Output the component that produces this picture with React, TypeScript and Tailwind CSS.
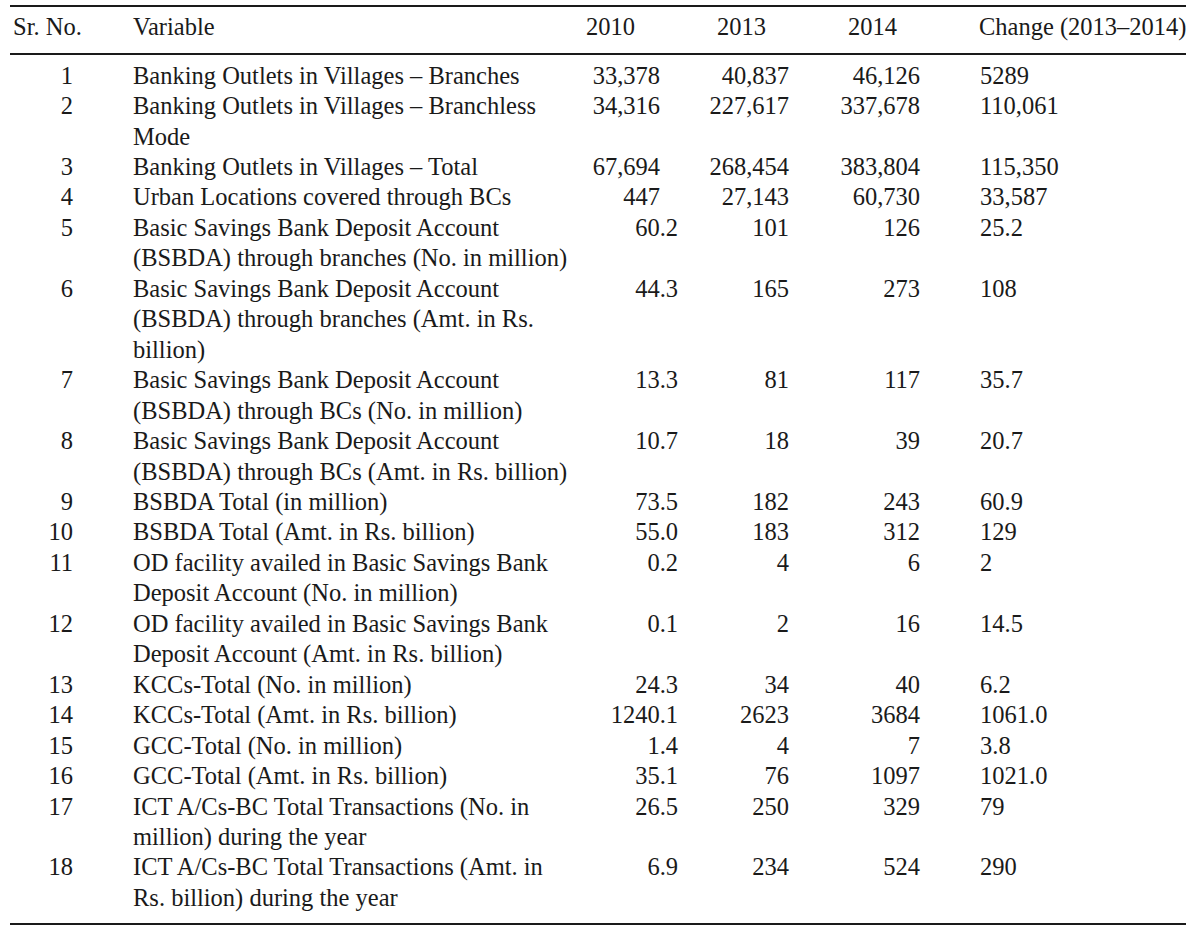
import React from "react";

type Row = {
  n: string;
  v: string[];
  a: string;
  b: string;
  c: string;
  d: string;
};

const rows: Row[] = [
  { n: "1", v: ["Banking Outlets in Villages – Branches"], a: "33,378", b: "40,837", c: "46,126", d: "5289" },
  { n: "2", v: ["Banking Outlets in Villages – Branchless", "Mode"], a: "34,316", b: "227,617", c: "337,678", d: "110,061" },
  { n: "3", v: ["Banking Outlets in Villages – Total"], a: "67,694", b: "268,454", c: "383,804", d: "115,350" },
  { n: "4", v: ["Urban Locations covered through BCs"], a: "447", b: "27,143", c: "60,730", d: "33,587" },
  { n: "5", v: ["Basic Savings Bank Deposit Account", "(BSBDA) through branches (No. in million)"], a: "60.2", b: "101", c: "126", d: "25.2" },
  { n: "6", v: ["Basic Savings Bank Deposit Account", "(BSBDA) through branches (Amt. in Rs.", "billion)"], a: "44.3", b: "165", c: "273", d: "108" },
  { n: "7", v: ["Basic Savings Bank Deposit Account", "(BSBDA) through BCs (No. in million)"], a: "13.3", b: "81", c: "117", d: "35.7" },
  { n: "8", v: ["Basic Savings Bank Deposit Account", "(BSBDA) through BCs (Amt. in Rs. billion)"], a: "10.7", b: "18", c: "39", d: "20.7" },
  { n: "9", v: ["BSBDA Total (in million)"], a: "73.5", b: "182", c: "243", d: "60.9" },
  { n: "10", v: ["BSBDA Total (Amt. in Rs. billion)"], a: "55.0", b: "183", c: "312", d: "129" },
  { n: "11", v: ["OD facility availed in Basic Savings Bank", "Deposit Account (No. in million)"], a: "0.2", b: "4", c: "6", d: "2" },
  { n: "12", v: ["OD facility availed in Basic Savings Bank", "Deposit Account (Amt. in Rs. billion)"], a: "0.1", b: "2", c: "16", d: "14.5" },
  { n: "13", v: ["KCCs-Total (No. in million)"], a: "24.3", b: "34", c: "40", d: "6.2" },
  { n: "14", v: ["KCCs-Total (Amt. in Rs. billion)"], a: "1240.1", b: "2623", c: "3684", d: "1061.0" },
  { n: "15", v: ["GCC-Total (No. in million)"], a: "1.4", b: "4", c: "7", d: "3.8" },
  { n: "16", v: ["GCC-Total (Amt. in Rs. billion)"], a: "35.1", b: "76", c: "1097", d: "1021.0" },
  { n: "17", v: ["ICT A/Cs-BC Total Transactions (No. in", "million) during the year"], a: "26.5", b: "250", c: "329", d: "79" },
  { n: "18", v: ["ICT A/Cs-BC Total Transactions (Amt. in", "Rs. billion) during the year"], a: "6.9", b: "234", c: "524", d: "290" },
];

const grid = "grid grid-cols-[123px_437px_108px_111px_131px_266px]";

export default function App() {
  return (
    <div
      className="min-h-[932px] w-[1196px] bg-white pl-[10px] pt-[5px] text-[24.5px] leading-[30.45px] text-[#1a1a1a]"
      style={{ fontFamily: '"Liberation Serif", "Times New Roman", serif' }}
    >
      <div className="w-[1176px] border-y-2 border-[#1a1a1a]">
        <div className={`${grid} border-b-2 border-[#1a1a1a] pb-[10.5px] pt-[5px]`}>
          <div className="pl-[3px] whitespace-nowrap">Sr. No.</div>
          <div>Variable</div>
          <div className="pl-[16px]">2010</div>
          <div className="pl-[39px]">2013</div>
          <div className="pl-[59px]">2014</div>
          <div className="pl-[59px] whitespace-nowrap">Change (2013–2014)</div>
        </div>
        <div className="pb-[9.5px] pt-[5.7px]">
          {rows.map((r) => {
            const isInt = !r.a.includes(".");
            return (
              <div key={r.n} className={grid}>
                <div className="w-[63px] text-right">{r.n}</div>
                <div className="whitespace-nowrap">
                  {r.v.map((line, i) => (
                    <div key={i}>{line}</div>
                  ))}
                </div>
                <div className={`text-right ${isInt ? "pr-[18px]" : ""}`}>{r.a}</div>
                <div className="text-right">{r.b}</div>
                <div className="text-right">{r.c}</div>
                <div className="pl-[60px]">{r.d}</div>
              </div>
            );
          })}
        </div>
      </div>
    </div>
  );
}
